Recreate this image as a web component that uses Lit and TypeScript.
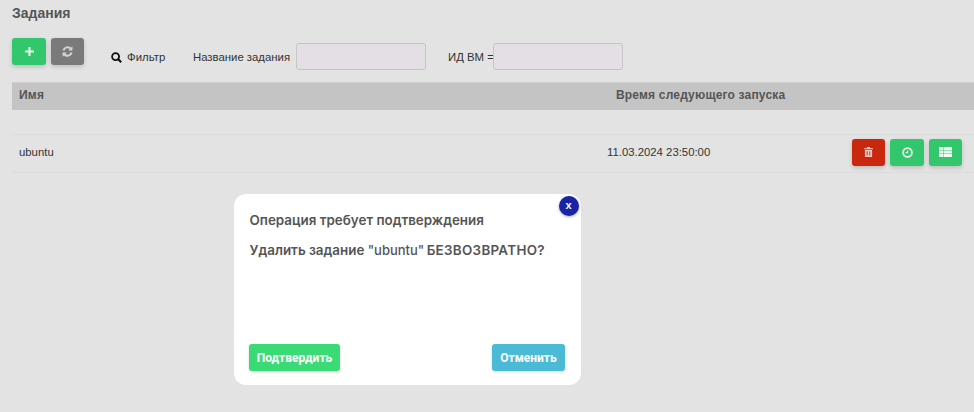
import { LitElement, html, css } from "lit";
import { customElement } from "lit/decorators.js";

@customElement("app-root")
export class AppRoot extends LitElement {
  static styles = css`
    :host { display: block; position: relative; width: 974px; height: 412px; overflow: hidden; background: #e3e3e3; font-family: "Liberation Sans", Arial, sans-serif; color: #333; }
    * { box-sizing: border-box; }
    .page { padding: 5px 0 0 12px; display: flex; flex-direction: column; }
    h1 { margin: 0; font-size: 14px; line-height: 16px; font-weight: 700; color: #555; }
    .toolbar { display: flex; align-items: flex-start; margin-top: 17px; height: 44px; }
    .btn { border: 0; padding: 0; display: flex; align-items: center; justify-content: center; border-radius: 3px; box-shadow: 0 2px 4px rgba(0,0,0,.16); }
    .add { width: 34px; height: 27px; background: #32c76c; }
    .refresh { width: 33px; height: 27px; background: #7a7a7a; margin-left: 5px; }
    .filter { display: flex; align-items: center; gap: 5px; margin: 12px 0 0 27px; font-size: 11.4px; line-height: 14px; color: #333; width: 82px; }
    .label { font-size: 11.35px; line-height: 14px; margin-top: 12px; color: #333; white-space: nowrap; }
    .l1 { width: 102.5px; }
    .input { width: 130px; height: 27.5px; margin-top: 4.5px; background: #e4dfe5; border: 1.5px solid #c6c4c7; border-radius: 3px; }
    .l2 { margin-left: 22.5px; width: 44.5px; }
    .thead { height: 28px; background: #c4c4c4; border-top: 1px solid #cfcfcf; display: grid; grid-template-columns: 604px 1fr; align-items: center; font-size: 12px; font-weight: 700; color: #555; }
    .thead span { margin-top: -4px; }
    .thead span:first-child { padding-left: 7px; letter-spacing: .2px; }
    .thead span:last-child { letter-spacing: .18px; }
    .row { margin-top: 24px; height: 39px; border-top: 1px solid #dcdcdc; border-bottom: 1px solid #dcdcdc; display: grid; grid-template-columns: 595px 245px 1fr; align-items: center; font-size: 11.35px; color: #333; }
    .row > span { margin-top: -3px; }
    .row > span:first-child { padding-left: 7px; }
    .actions { display: flex; gap: 5px; }
    .act { width: 33px; height: 27px; margin-top: -3px; }
    .green.wide { width: 34px; }
    .red { background: #c9280f; }
    .green { background: #32c76c; }
    .modal { position: absolute; left: 234px; top: 194px; width: 346.5px; height: 191px; background: #fff; border-radius: 12px; padding: 18px 15.5px 14px; display: flex; flex-direction: column; color: #555; font-family: Inter, "Liberation Sans", sans-serif; font-weight: 600; }
    .modal h2 { margin: 0; font-size: 13.4px; line-height: 17px; font-weight: 600; color: #555; }
    .modal p { margin: 13px 0 0; font-size: 13.4px; line-height: 16px; flex: 1; }
    .modal p .name { font-weight: 500; font-size: 13px; margin-right: -1px; }
    .modal p .caps { letter-spacing: .3px; }
    .close { position: absolute; right: 2px; top: 2px; width: 20px; height: 20px; border-radius: 50%; background: #1a23a8; color: #fff; border: 0; padding: 0 0 2px; font: 700 11px "Liberation Sans", sans-serif; box-shadow: 0 1px 3px rgba(0,0,0,.35); }
    .foot { display: flex; justify-content: space-between; margin-top: 1px; }
    .mbtn { height: 27px; border: 0; border-radius: 3px; color: #fff; font: 700 12px Roboto, "Liberation Sans", sans-serif; box-shadow: 0 1px 3px rgba(0,0,0,.15); padding: 0; }
    .ok { width: 91px; margin-left: -.5px; background: #3adb76; }
    .no { width: 73px; background: #4bbad6; }
    svg { display: block; }
  `;

  render() {
    return html`
      <div class="page">
        <h1>Задания</h1>
        <div class="toolbar">
          <button class="btn add" aria-label="add">
            <svg width="9" height="9" viewBox="0 0 10 10"><path d="M3.8 0h2.4v3.8H10v2.4H6.2V10H3.8V6.2H0V3.8h3.8z" fill="#e8f5ec"/></svg>
          </button>
          <button class="btn refresh" aria-label="refresh">
            <svg width="11" height="11" viewBox="0 0 12 12" fill="none" stroke="#d4d4d4" stroke-width="2.2"><path d="M1.6 5A4.6 4.6 0 0 1 9.6 3"/><path d="M10.4 7A4.6 4.6 0 0 1 2.4 9"/><path d="M11.4 .4v4.6H6.8z" fill="#d4d4d4" stroke="none"/><path d="M.6 11.6V7h4.6z" fill="#d4d4d4" stroke="none"/></svg>
          </button>
          <div class="filter">
            <svg width="11" height="11" viewBox="0 0 11 11" fill="none" stroke="#111" stroke-width="1.8"><circle cx="4.6" cy="4.6" r="3.5"/><path d="M7.2 7.2l3 3" stroke-width="2.2"/></svg>
            <span>Фильтр</span>
          </div>
          <span class="label l1">Название задания</span>
          <div class="input"></div>
          <span class="label l2">ИД ВМ =</span>
          <div class="input"></div>
        </div>
        <div class="thead"><span>Имя</span><span>Время следующего запуска</span></div>
        <div class="row">
          <span>ubuntu</span>
          <span>11.03.2024 23:50:00</span>
          <div class="actions">
            <button class="btn act red" aria-label="delete">
              <svg width="9" height="10" viewBox="0 0 10 11"><path d="M3.5 0h3l.6 1.3H10v1.2H0V1.3h2.9zM1 3.3h8V11H1zM3 4.8v4.7h1V4.8zm3 0v4.7h1V4.8z" fill="#f3c9c0" fill-rule="evenodd"/></svg>
            </button>
            <button class="btn act green wide" aria-label="schedule">
              <svg width="11" height="11" viewBox="0 0 11 11" fill="none" stroke="#e8f7ee" stroke-width="1.8"><circle cx="5.5" cy="5.5" r="4.4"/><path d="M5.6 3.4v2.3H3.6" stroke-width="1.2"/></svg>
            </button>
            <button class="btn act green" aria-label="list">
              <svg width="13" height="10" viewBox="0 0 13 10" fill="#f0faf4"><path d="M0 0h4.5v3H0zM5 0h8v3H5zM0 3.5h4.5v3H0zM5 3.5h8v3H5zM0 7h4.5v3H0zM5 7h8v3H5z"/></svg>
            </button>
          </div>
        </div>
      </div>
      <div class="modal">
        <button class="close">x</button>
        <h2>Операция требует подтверждения</h2>
        <p>Удалить задание <span class="name">"ubuntu"</span> <span class="caps">БЕЗВОЗВРАТНО?</span></p>
        <div class="foot">
          <button class="mbtn ok">Подтвердить</button>
          <button class="mbtn no">Отменить</button>
        </div>
      </div>
    `;
  }
}
